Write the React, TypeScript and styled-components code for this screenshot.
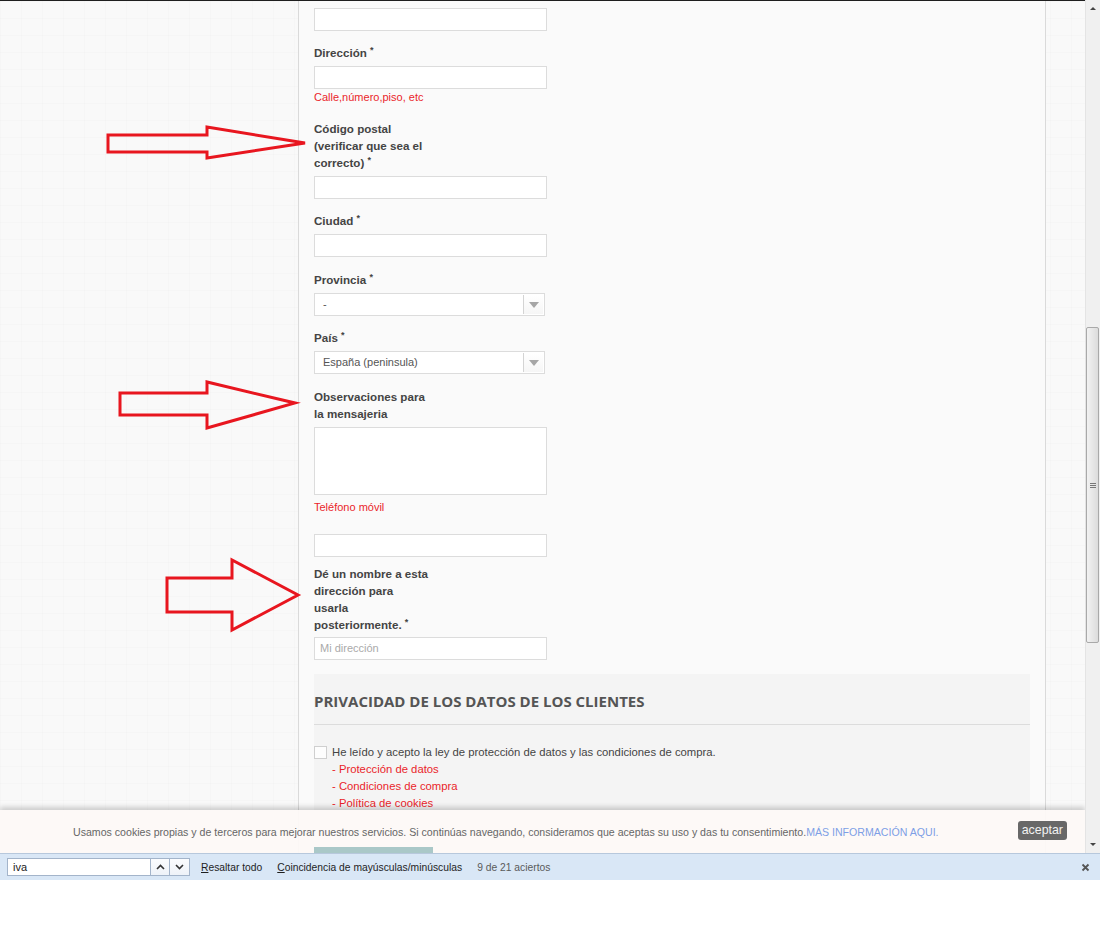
import React from 'react';
import styled, { createGlobalStyle } from 'styled-components';

const GlobalStyle = createGlobalStyle`
  html, body {
    margin: 0;
    padding: 0;
    background: #fff;
  }
  body {
    font-family: "Liberation Sans", Arial, sans-serif;
  }
  * {
    box-sizing: border-box;
  }
`;

const Screen = styled.div`
  width: 1100px;
  height: 928px;
  display: flex;
  flex-direction: column;
  background: #fff;
  overflow: hidden;
`;

const Viewport = styled.div`
  height: 853px;
  display: flex;
`;

const PageArea = styled.div`
  position: relative;
  flex: 1;
  overflow: hidden;
  border-top: 1px solid #1e1e1e;
  background-color: #f9f9f9;
  background-image:
    linear-gradient(rgba(0, 0, 0, 0.011) 1px, transparent 1px),
    linear-gradient(90deg, rgba(0, 0, 0, 0.011) 1px, transparent 1px);
  background-size: 21px 17px;
`;

const Column = styled.div`
  width: 748px;
  height: 100%;
  margin-left: 298px;
  padding: 7px 15px 0;
  background: #fafafa;
  border-left: 1px solid #dadada;
  border-right: 1px solid #dadada;
`;

const Field = styled.div<{ $top?: number }>`
  margin-top: ${(p) => p.$top ?? 13}px;
`;

const Label = styled.div<{ $after?: number }>`
  font-size: 11.6px;
  font-weight: bold;
  line-height: 17px;
  color: #444;
  margin-bottom: ${(p) => p.$after ?? 5}px;
`;

const Req = styled.span`
  font-size: 9px;
  line-height: 1;
  vertical-align: 4px;
`;

const RedNote = styled.div<{ $after?: number }>`
  font-size: 11px;
  line-height: 17px;
  color: #ea1f2b;
  margin-bottom: ${(p) => p.$after ?? 0}px;
`;

const TextInput = styled.div<{ $tall?: boolean }>`
  width: 233px;
  height: ${(p) => (p.$tall ? 68 : 23)}px;
  background: #fff;
  border: 1px solid #dcdcdc;
  font-size: 11px;
  line-height: 21px;
  padding-left: 5px;
  color: #aaa;
`;

const Select = styled.div`
  width: 231px;
  height: 23px;
  display: flex;
  align-items: stretch;
  background: #fff;
  border: 1px solid #dcdcdc;
`;

const SelectValue = styled.div`
  flex: 1;
  font-size: 11px;
  line-height: 21px;
  color: #555;
  padding-left: 8px;
`;

const SelectArrow = styled.div`
  width: 20px;
  margin: 1px 1px 1px 0;
  border-left: 1px solid #d4d4d4;
  background: linear-gradient(#fff, #f6f6f6);
  display: flex;
  align-items: center;
  justify-content: center;

  &::after {
    content: '';
    border-left: 5px solid transparent;
    border-right: 5px solid transparent;
    border-top: 6px solid #a6a6a6;
  }
`;

const Privacy = styled.div`
  margin-top: 14px;
  padding-top: 17px;
  background: #f4f4f4;
  height: 400px;
`;

const PrivacyTitle = styled.h2`
  margin: 0;
  font-family: "Open Sans", "Liberation Sans", sans-serif;
  font-size: 15px;
  font-weight: 700;
  line-height: 20px;
  color: #555;
  padding-bottom: 13px;
  border-bottom: 1px solid #dcdcdc;
`;

const CheckRow = styled.div`
  margin-top: 19px;
  display: flex;
  align-items: center;
  gap: 5px;
  font-size: 11.3px;
  line-height: 17px;
  color: #444;
`;

const Box = styled.span`
  width: 13px;
  height: 13px;
  background: #fdfdfd;
  border: 1px solid #cfcfcf;
`;

const LinkList = styled.div`
  padding-left: 18px;
`;

const RedLink = styled.div`
  font-size: 11.3px;
  line-height: 17px;
  color: #ea1f2b;
`;

const SubmitButton = styled.div`
  position: relative;
  z-index: 2;
  margin-top: 35px;
  width: 119px;
  height: 30px;
  background: #aac8c8;
`;

const Annotations = styled.svg`
  position: absolute;
  top: 0;
  left: 0;
  z-index: 3;
  pointer-events: none;
`;

const CookieBar = styled.div`
  position: absolute;
  z-index: 1;
  left: 0;
  right: 0;
  bottom: 0;
  height: 43px;
  display: flex;
  align-items: center;
  padding: 0 18px 0 73px;
  background: rgba(253, 249, 246, 0.94);
  box-shadow: 0 -3px 5px rgba(0, 0, 0, 0.18);
`;

const CookieText = styled.div`
  font-size: 10.6px;
  color: #666;
  white-space: nowrap;
  padding-top: 1px;
`;

const CookieLink = styled.span`
  color: #7e9fe6;
`;

const AcceptButton = styled.div`
  margin-left: auto;
  margin-bottom: 2px;
  height: 19px;
  padding: 0 4px;
  background: #686868;
  border-radius: 3px;
  color: #f2f2f2;
  font-size: 12.4px;
  line-height: 19px;
`;

const Scrollbar = styled.div`
  width: 15px;
  display: flex;
  flex-direction: column;
  background: #f0f0f0;
  border-left: 1px solid #e4e4e4;
`;

const ScrollArrow = styled.div<{ $down?: boolean }>`
  height: 17px;
  display: flex;
  align-items: center;
  justify-content: center;

  &::after {
    content: '';
    border-left: 3px solid transparent;
    border-right: 3px solid transparent;
    ${(p) => (p.$down ? 'border-top: 3px solid #444;' : 'border-bottom: 3px solid #444;')}
  }
`;

const ScrollTrack = styled.div`
  flex: 1;
`;

const Thumb = styled.div`
  margin-top: 310px;
  width: 13px;
  height: 316px;
  border: 1px solid #a9a9a9;
  border-radius: 2px;
  background: linear-gradient(90deg, #f2f2f2, #dcdcdc);
  display: flex;
  align-items: center;
  justify-content: center;
`;

const Grip = styled.div`
  width: 6px;
  height: 5px;
  border-top: 1px solid #777;
  border-bottom: 1px solid #777;
  position: relative;

  &::after {
    content: '';
    position: absolute;
    left: 0;
    right: 0;
    top: 1px;
    border-top: 1px solid #777;
  }
`;

const FindBar = styled.div`
  height: 27px;
  display: flex;
  align-items: center;
  padding: 0 10px 0 7px;
  background: #d9e7f6;
  border-top: 1px solid #b7c8dc;
  font-size: 10.3px;
  color: #222;
`;

const FindInput = styled.div`
  width: 143px;
  height: 18px;
  background: #fff;
  border: 1px solid #a3b4ca;
  border-right: none;
  padding-left: 5px;
  line-height: 16px;
  font-size: 11px;
`;

const FindNav = styled.div`
  width: 20px;
  height: 18px;
  display: flex;
  align-items: center;
  justify-content: center;
  background: linear-gradient(#fbfcfe, #eef2f8);
  border: 1px solid #a3b4ca;
  & + & {
    border-left: none;
  }
`;

const FindOption = styled.span<{ $gap: number; $muted?: boolean }>`
  margin-left: ${(p) => p.$gap}px;
  color: ${(p) => (p.$muted ? '#5a5a5a' : '#1e1e1e')};
`;

const CloseX = styled.div`
  margin-left: auto;
  display: flex;
`;

const Chevron = ({ up }: { up?: boolean }) => (
  <svg width="9" height="6" viewBox="0 0 9 6">
    <path
      d={up ? 'M1 5 L4.5 1.5 L8 5' : 'M1 1 L4.5 4.5 L8 1'}
      fill="none"
      stroke="#333"
      strokeWidth="1.6"
    />
  </svg>
);

const App: React.FC = () => {
  return (
    <>
      <GlobalStyle />
      <Screen>
        <Viewport>
          <PageArea>
            <Column>
              <TextInput />

              <Field>
                <Label>Dirección <Req>*</Req></Label>
                <TextInput />
                <RedNote>Calle,número,piso, etc</RedNote>
              </Field>

              <Field $top={14}>
                <Label>
                  Código postal
                  <br />
                  (verificar que sea el
                  <br />
                  correcto) <Req>*</Req>
                </Label>
                <TextInput />
              </Field>

              <Field>
                <Label>Ciudad <Req>*</Req></Label>
                <TextInput />
              </Field>

              <Field $top={14}>
                <Label>Provincia <Req>*</Req></Label>
                <Select>
                  <SelectValue>-</SelectValue>
                  <SelectArrow />
                </Select>
              </Field>

              <Field>
                <Label>País <Req>*</Req></Label>
                <Select>
                  <SelectValue>España (peninsula)</SelectValue>
                  <SelectArrow />
                </Select>
              </Field>

              <Field $top={14}>
                <Label>
                  Observaciones para
                  <br />
                  la mensajeria
                </Label>
                <TextInput $tall />
              </Field>

              <Field $top={4}>
                <RedNote $after={18}>Teléfono móvil</RedNote>
                <TextInput />
              </Field>

              <Field $top={8}>
                <Label $after={4}>
                  Dé un nombre a esta
                  <br />
                  dirección para
                  <br />
                  usarla
                  <br />
                  posteriormente. <Req>*</Req>
                </Label>
                <TextInput>Mi dirección</TextInput>
              </Field>

              <Privacy>
                <PrivacyTitle>PRIVACIDAD DE LOS DATOS DE LOS CLIENTES</PrivacyTitle>
                <CheckRow>
                  <Box />
                  He leído y acepto la ley de protección de datos y las condiciones de compra.
                </CheckRow>
                <LinkList>
                  <RedLink>- Protección de datos</RedLink>
                  <RedLink>- Condiciones de compra</RedLink>
                  <RedLink>- Política de cookies</RedLink>
                </LinkList>
                <SubmitButton />
              </Privacy>
            </Column>

            <Annotations width="1085" height="852" viewBox="0 1 1085 852">
              <g fill="none" stroke="#e8161f" strokeWidth="3" strokeLinejoin="miter">
                <polygon points="108,135 207,135 207,127 305,143 207,158 207,152 108,152" />
                <polygon points="120,393 207,393 207,382 295,403 207,428 207,415 120,415" />
                <polygon points="167,578 232,578 232,560 298,595 232,630 232,612 167,612" />
              </g>
            </Annotations>

            <CookieBar>
              <CookieText>
                Usamos cookies propias y de terceros para mejorar nuestros servicios. Si continúas
                navegando, consideramos que aceptas su uso y das tu consentimiento.
                <CookieLink>MÁS INFORMACIÓN AQUI.</CookieLink>
              </CookieText>
              <AcceptButton>aceptar</AcceptButton>
            </CookieBar>
          </PageArea>

          <Scrollbar>
            <ScrollArrow />
            <ScrollTrack>
              <Thumb>
                <Grip />
              </Thumb>
            </ScrollTrack>
            <ScrollArrow $down />
          </Scrollbar>
        </Viewport>

        <FindBar>
          <FindInput>iva</FindInput>
          <FindNav>
            <Chevron up />
          </FindNav>
          <FindNav>
            <Chevron />
          </FindNav>
          <FindOption $gap={11}>
            <u>R</u>esaltar todo
          </FindOption>
          <FindOption $gap={15}>
            <u>C</u>oincidencia de mayúsculas/minúsculas
          </FindOption>
          <FindOption $gap={15} $muted>
            9 de 21 aciertos
          </FindOption>
          <CloseX>
            <svg width="9" height="9" viewBox="0 0 9 9">
              <path d="M1.5 1.5 L7.5 7.5 M7.5 1.5 L1.5 7.5" stroke="#555" strokeWidth="1.8" />
            </svg>
          </CloseX>
        </FindBar>
      </Screen>
    </>
  );
};

export default App;
